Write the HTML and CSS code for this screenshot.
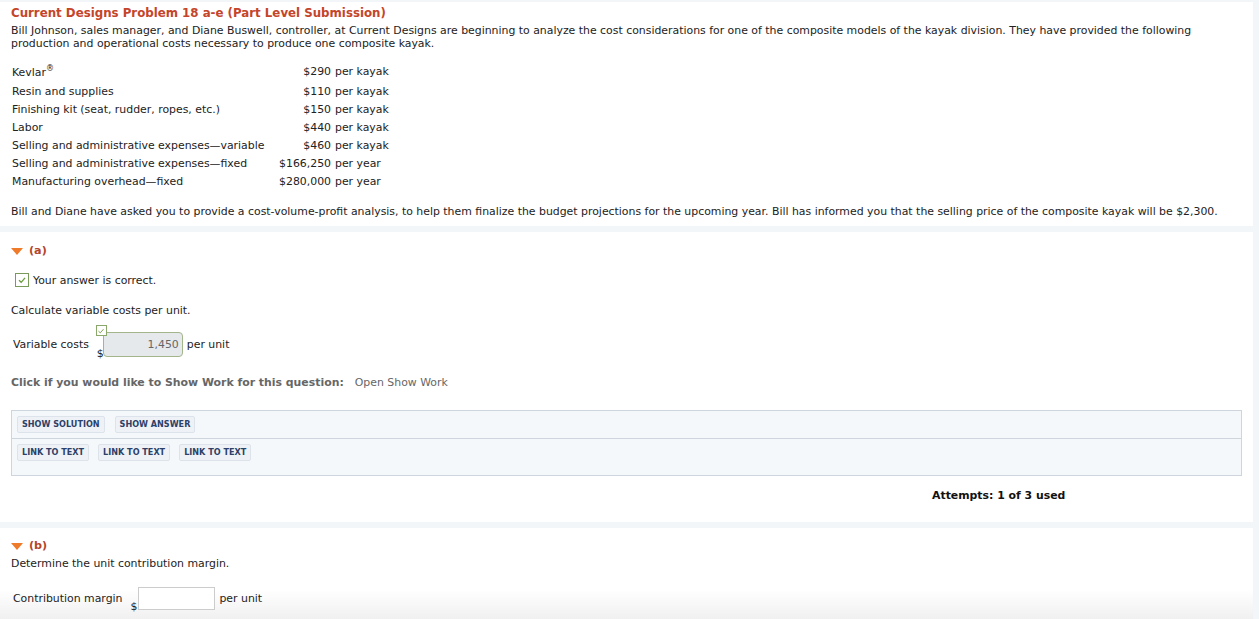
FILE: index.html
```html
<!DOCTYPE html>
<html lang="en">
<head>
    <meta charset="UTF-8">
    <meta name="viewport" content="width=device-width, initial-scale=1.0">
    <title>Current Designs Problem 18 a-e</title>
    <link rel="stylesheet" href="styles.css">
</head>
<body>
    <div class="page">

        <!-- Enunciado del problema -->
        <div class="panel intro">
            <h1 class="title">Current Designs Problem 18 a-e (Part Level Submission)</h1>
            <p class="lead">Bill Johnson, sales manager, and Diane Buswell, controller, at Current Designs are beginning to analyze the cost considerations for one of the composite models of the kayak division. They have provided the following production and operational costs necessary to produce one composite kayak.</p>

            <table class="costs">
                <tr><td class="name">Kevlar<sup>&reg;</sup></td><td class="amt">$290</td><td class="unit">per kayak</td></tr>
                <tr><td class="name">Resin and supplies</td><td class="amt">$110</td><td class="unit">per kayak</td></tr>
                <tr><td class="name">Finishing kit (seat, rudder, ropes, etc.)</td><td class="amt">$150</td><td class="unit">per kayak</td></tr>
                <tr><td class="name">Labor</td><td class="amt">$440</td><td class="unit">per kayak</td></tr>
                <tr><td class="name">Selling and administrative expenses&mdash;variable</td><td class="amt">$460</td><td class="unit">per kayak</td></tr>
                <tr><td class="name">Selling and administrative expenses&mdash;fixed</td><td class="amt">$166,250</td><td class="unit">per year</td></tr>
                <tr><td class="name">Manufacturing overhead&mdash;fixed</td><td class="amt">$280,000</td><td class="unit">per year</td></tr>
            </table>

            <p class="closing">Bill and Diane have asked you to provide a cost-volume-profit analysis, to help them finalize the budget projections for the upcoming year. Bill has informed you that the selling price of the composite kayak will be $2,300.</p>
        </div>

        <!-- Parte (a) -->
        <div class="panel part">
            <div class="part-head"><span class="caret"></span>(a)</div>

            <div class="correct">
                <span class="tick-box">
                    <svg width="10" height="10" viewBox="0 0 10 10"><path d="M2 5.2 L4.2 7.3 L8 2.8" fill="none" stroke="#6b9a3c" stroke-width="1.3"/></svg>
                </span>
                Your answer is correct.
            </div>

            <p class="question">Calculate variable costs per unit.</p>

            <div class="answer-row">
                <span class="answer-label">Variable costs</span>
                <span class="dollar">$</span>
                <span class="field-wrap">
                    <span class="mini-tick">
                        <svg width="8" height="8" viewBox="0 0 8 8"><path d="M1.5 4.2 L3.3 5.8 L6.5 2.2" fill="none" stroke="#7aa34a" stroke-width="1"/></svg>
                    </span>
                    <input class="field graded" type="text" value="1,450" readonly>
                </span>
                <span class="per">per unit</span>
            </div>

            <div class="show-work">
                <strong>Click if you would like to Show Work for this question:</strong>
                <a href="#" class="open-work">Open Show Work</a>
            </div>

            <div class="tools">
                <div class="tool-row">
                    <button class="tool-btn">SHOW SOLUTION</button>
                    <button class="tool-btn">SHOW ANSWER</button>
                </div>
                <div class="tool-row">
                    <button class="tool-btn">LINK TO TEXT</button>
                    <button class="tool-btn">LINK TO TEXT</button>
                    <button class="tool-btn">LINK TO TEXT</button>
                </div>
            </div>

            <div class="attempts">Attempts: 1 of 3 used</div>
        </div>

        <!-- Parte (b) -->
        <div class="panel part last">
            <div class="part-head"><span class="caret"></span>(b)</div>
            <p class="question tight">Determine the unit contribution margin.</p>

            <div class="answer-row wide">
                <span class="answer-label">Contribution margin</span>
                <span class="dollar">$</span>
                <input class="field empty" type="text">
                <span class="per">per unit</span>
            </div>
        </div>

    </div>
</body>
</html>
```

FILE: styles.css
```css
body {
    margin: 0;
    font-family: "DejaVu Sans", Verdana, sans-serif;
    font-size: 10.9px;
    color: #222;
    background-color: #f3f6f9;
}

.page {
    padding: 2px 6px 0 0;
    display: flex;
    flex-direction: column;
    gap: 6px;
}

.panel {
    background: #fff;
    padding: 0 11px;
}

/* Enunciado */
.title {
    margin: 0;
    padding-top: 3px;
    font-size: 11.8px;
    font-weight: bold;
    color: #c4452a;
    line-height: 16px;
}

.lead {
    margin: 3px 0 0;
    line-height: 13px;
}

.costs {
    border-collapse: collapse;
    margin: 9px 0 0 1px;
}

.costs td {
    padding: 0;
    height: 18px;
    white-space: nowrap;
}

.costs tr:first-child td {
    height: 21px;
    padding-top: 2px;
}

.costs sup {
    font-size: 8px;
    vertical-align: 5px;
}

.costs .name {
    width: 266px;
}

.costs .amt {
    text-align: right;
    width: 53px;
}

.costs .unit {
    padding-left: 4px;
}

.closing {
    margin: 15px 0 0;
    padding-bottom: 7px;
    line-height: 14px;
}

/* Partes */
.part {
    padding-top: 11px;
    padding-bottom: 20px;
}

.part-head {
    display: flex;
    align-items: center;
    gap: 6px;
    font-weight: bold;
    color: #b4452a;
    font-size: 11.2px;
    line-height: 16px;
}

.caret {
    width: 0;
    height: 0;
    border-left: 6px solid transparent;
    border-right: 6px solid transparent;
    border-top: 7px solid #ee7a2a;
}

.correct {
    display: flex;
    align-items: center;
    gap: 4px;
    margin: 14px 0 0 4px;
}

.tick-box {
    width: 12px;
    height: 12px;
    border: 1px solid #7a9a5a;
    display: flex;
    align-items: center;
    justify-content: center;
    background: #fff;
}

.question {
    margin: 17px 0 0;
    line-height: 14px;
}

.question.tight {
    margin-top: 3px;
}

.answer-row {
    display: flex;
    align-items: center;
    margin: 14px 0 0 2px;
}

.answer-row.wide {
    margin-top: 16px;
}

.answer-label {
    margin-right: 8px;
}

.dollar {
    align-self: flex-end;
    margin-bottom: -3px;
    margin-right: -1px;
}

.field-wrap {
    position: relative;
    display: flex;
}

.mini-tick {
    position: absolute;
    left: -7px;
    top: -7px;
    width: 9px;
    height: 9px;
    border: 1px solid #8aa86a;
    background: #fff;
    display: flex;
    align-items: center;
    justify-content: center;
}

.field {
    font-family: inherit;
    font-size: 10.9px;
    box-sizing: border-box;
    text-align: right;
    outline: none;
}

.field.graded {
    width: 80px;
    height: 25px;
    background: #e6e9ec;
    border: 1.5px solid #a3b58a;
    border-radius: 4px;
    color: #666;
    padding: 0 3px;
}

.field.empty {
    width: 77px;
    height: 23px;
    margin-left: 2px;
    background: #fff;
    border: 1px solid #ccc;
}

.per {
    margin-left: 4px;
}

.show-work {
    margin-top: 19px;
    color: #666;
    display: flex;
    gap: 11px;
}

.open-work {
    color: #666;
    text-decoration: none;
}

/* Botones de ayuda */
.tools {
    margin-top: 21px;
    background: #f5f8fb;
    border: 1px solid #cfd5dc;
}

.tool-row {
    display: flex;
    gap: 10px;
    padding: 5px 5px;
}

.tool-row + .tool-row {
    border-top: 1px solid #cfd5dc;
    gap: 9px;
    padding-bottom: 14px;
}

.tool-btn {
    font-family: inherit;
    font-size: 8.1px;
    font-weight: bold;
    color: #2c4068;
    background: #eef2f6;
    border: 1px solid #dde3ea;
    border-radius: 2px;
    box-sizing: border-box;
    height: 17px;
    padding: 0 4px;
    line-height: 15px;
    cursor: pointer;
}

.attempts {
    margin: 13px 0 0 921px;
    font-weight: bold;
    color: #111;
}

.last {
    padding-top: 10px;
    min-height: 200px;
    background: linear-gradient(to bottom, #fff 0, #fff 62px, #f0f0f0 92px);
}
```
